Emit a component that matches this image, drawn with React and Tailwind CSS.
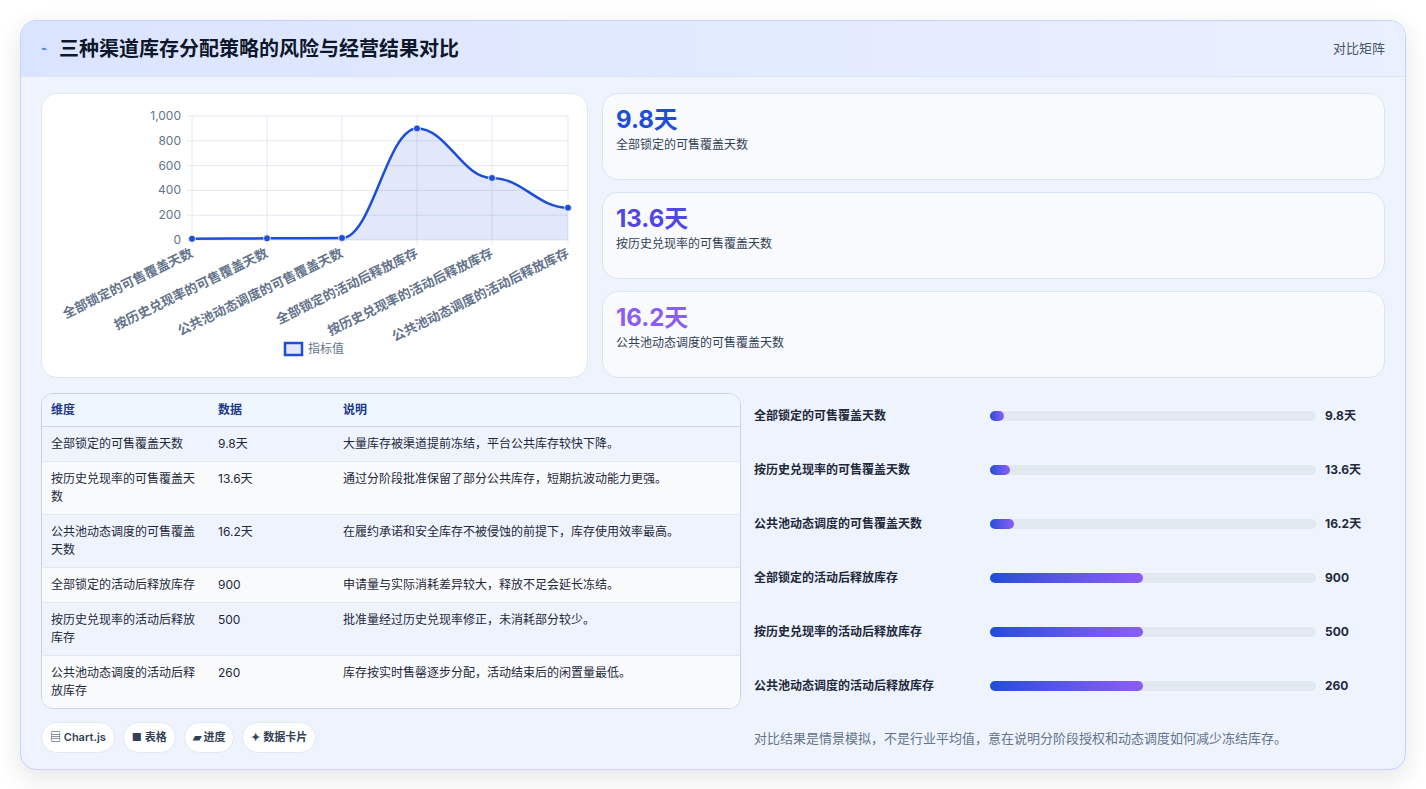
import React from 'react';

const ROWS = [
  ['全部锁定的可售覆盖天数', '9.8天', '大量库存被渠道提前冻结，平台公共库存较快下降。'],
  ['按历史兑现率的可售覆盖天数', '13.6天', '通过分阶段批准保留了部分公共库存，短期抗波动能力更强。'],
  ['公共池动态调度的可售覆盖天数', '16.2天', '在履约承诺和安全库存不被侵蚀的前提下，库存使用效率最高。'],
  ['全部锁定的活动后释放库存', '900', '申请量与实际消耗差异较大，释放不足会延长冻结。'],
  ['按历史兑现率的活动后释放库存', '500', '批准量经过历史兑现率修正，未消耗部分较少。'],
  ['公共池动态调度的活动后释放库存', '260', '库存按实时售罄逐步分配，活动结束后的闲置量最低。'],
];

const BARS = [
  ['全部锁定的可售覆盖天数', '9.8天', 4.3],
  ['按历史兑现率的可售覆盖天数', '13.6天', 6],
  ['公共池动态调度的可售覆盖天数', '16.2天', 7.4],
  ['全部锁定的活动后释放库存', '900', 47],
  ['按历史兑现率的活动后释放库存', '500', 47],
  ['公共池动态调度的活动后释放库存', '260', 47],
];

const METRICS = [
  ['9.8天', '全部锁定的可售覆盖天数', 'text-[#1d4ed8]'],
  ['13.6天', '按历史兑现率的可售覆盖天数', 'text-[#4f46e5]'],
  ['16.2天', '公共池动态调度的可售覆盖天数', 'text-[#8b5cf6]'],
];

const xs = [150, 225, 300, 375, 450, 526];
const vals = [9.8, 13.6, 16.2, 900, 500, 260];
const yOf = (v) => 146 - v * 0.124;

function Chart() {
  const pts = xs.map((x, i) => [x, yOf(vals[i])]);
  let d = `M${pts[0][0]},${pts[0][1]}`;
  for (let i = 1; i < pts.length; i++) {
    const [x0, y0] = pts[i - 1];
    const [x1, y1] = pts[i];
    const dx = (x1 - x0) * 0.4;
    d += ` C${x0 + dx},${y0} ${x1 - dx},${y1} ${x1},${y1}`;
  }
  const area = `${d} L526,146 L150,146 Z`;
  return (
    <svg width="546" height="284" className="block">
      {[0, 200, 400, 600, 800, 1000].map((v) => (
        <g key={v}>
          <line x1="145" x2="526" y1={yOf(v)} y2={yOf(v)} stroke="#e2e8f0" />
          <text x="139" y={yOf(v) + 4} textAnchor="end" fontSize="12" fill="#64748b">{v.toLocaleString('en-US')}</text>
        </g>
      ))}
      {xs.map((x) => (
        <line key={x} x1={x} x2={x} y1="22" y2="151" stroke="#e2e8f0" />
      ))}
      <path d={area} fill="rgba(29,78,216,0.13)" />
      <path d={d} fill="none" stroke="#1d4ed8" strokeWidth="2.5" />
      {pts.map(([x, y], i) => (
        <circle key={i} cx={x} cy={y} r="3.5" fill="#1d4ed8" stroke="#fff" strokeWidth="0.8" />
      ))}
      {ROWS.map((r, i) => (
        <text key={i} x={xs[i] + 2} y="162" textAnchor="end" fontSize="13" fill="#64748b" fontWeight="600" transform={`rotate(-26 ${xs[i] + 2} 162)`}>{r[0]}</text>
      ))}
      <rect x="243" y="249" width="17" height="12" fill="rgba(29,78,216,0.13)" stroke="#1d4ed8" strokeWidth="2.5" />
      <text x="266" y="259" fontSize="12" fill="#64748b">指标值</text>
    </svg>
  );
}

export default function App() {
  return (
    <div className="min-h-[789px] bg-white p-5" style={{ fontFamily: 'Inter, "Noto Sans CJK SC", sans-serif' }}>
      <div className="overflow-hidden rounded-2xl border border-[#c7d2fe] bg-[#eef3fd] shadow-[0_8px_24px_rgba(30,41,59,0.12)]">
        <div className="flex h-[56px] items-center justify-between bg-gradient-to-r from-[#dbe4ff] to-[#eaf0ff] px-5 border-b border-[#dde5f7]">
          <div className="flex items-center gap-3">
            <span className="text-[10px] text-[#2563eb]">⌁</span>
            <span className="text-[20px] font-bold text-[#0f172a]">三种渠道库存分配策略的风险与经营结果对比</span>
          </div>
          <span className="text-[13px] text-[#475569]">对比矩阵</span>
        </div>
        <div className="px-5 pt-4 pb-4">
          <div className="flex gap-[14px]">
            <div className="h-[285px] w-[547px] shrink-0 rounded-2xl border border-[#e2e8f0] bg-white"><Chart /></div>
            <div className="flex flex-1 flex-col gap-[12px]">
              {METRICS.map(([v, l, c]) => (
                <div key={v} className="h-[87px] rounded-2xl border border-[#dbe4f3] bg-[#f8fafe] px-[13px] pt-[10px]">
                  <div className={`text-[24px] font-bold leading-[32px] ${c}`}>{v}</div>
                  <div className="text-[12px] text-[#334155]">{l}</div>
                </div>
              ))}
            </div>
          </div>
          <div className="mt-[15px] flex gap-[13px]">
            <div className="w-[700px] shrink-0">
              <div className="overflow-hidden rounded-xl border border-[#cbd5e1] bg-white text-[12px] text-[#1e293b]">
                <div className="grid h-[33px] grid-cols-[167px_125px_1fr] items-center border-b border-[#cbd5e1] bg-[#eff6ff] px-[9px] font-semibold text-[#1e3a8a]">
                  <span>维度</span><span>数据</span><span>说明</span>
                </div>
                {ROWS.map((r, i) => (
                  <div key={i} className={`grid grid-cols-[167px_125px_1fr] border-b border-[#e2e8f0] px-[9px] py-[8px] leading-[18px] last:border-b-0 ${i % 2 === 0 ? 'bg-[#eef3fd]' : 'bg-[#f8fafc]'}`}>
                    <span className="pr-3">{r[0]}</span><span>{r[1]}</span><span>{r[2]}</span>
                  </div>
                ))}
              </div>
              <div className="mt-[13px] flex gap-[8px]">
                {['▤ Chart.js', '■ 表格', '▰ 进度', '✦ 数据卡片'].map((t) => (
                  <span key={t} className="rounded-full border border-[#e2e8f0] bg-white px-[8px] py-[6px] text-[11px] font-semibold text-[#334155]">{t}</span>
                ))}
              </div>
            </div>
            <div className="flex-1 pt-[14px]">
              {BARS.map(([l, v, p]) => (
                <div key={l} className="flex h-[54px] items-start">
                  <span className="w-[236px] text-[12px] font-semibold text-[#1e293b]">{l}</span>
                  <div className="mt-[4px] h-[10px] w-[326px] rounded-full bg-[#e2e8f0]">
                    <div className="h-full rounded-full bg-gradient-to-r from-[#1d4ed8] to-[#8b5cf6]" style={{ width: `${p}%` }} />
                  </div>
                  <span className="ml-[9px] text-[12px] font-bold text-[#1e293b]">{v}</span>
                </div>
              ))}
              <p className="mt-[-2px] text-[13px] text-[#64748b]">对比结果是情景模拟，不是行业平均值，意在说明分阶段授权和动态调度如何减少冻结库存。</p>
            </div>
          </div>
        </div>
      </div>
    </div>
  );
}
